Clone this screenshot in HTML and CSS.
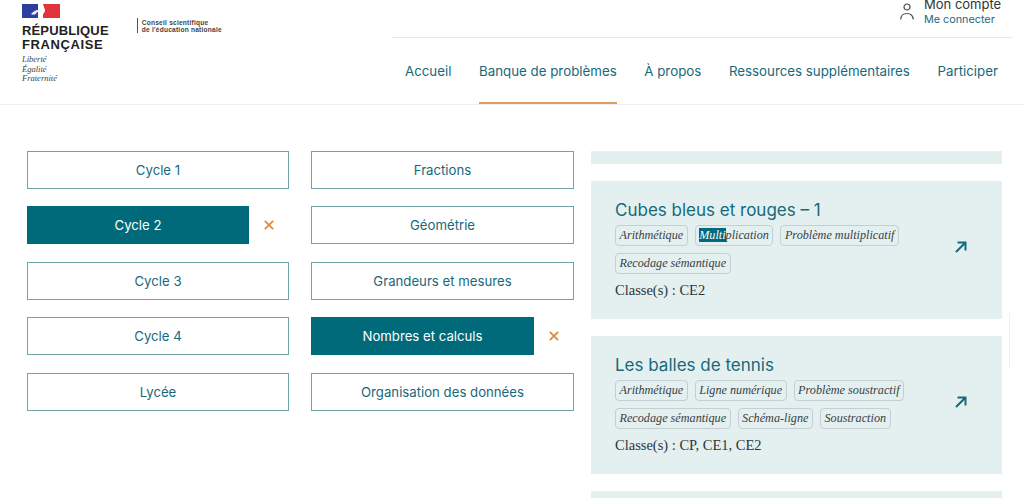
FILE: index.html
```html
<!DOCTYPE html>
<html lang="fr">
  <head>
    <meta charset="UTF-8" />
    <meta name="viewport" content="width=device-width, initial-scale=1.0" />
    <title>Banque de problèmes</title>
    <link rel="stylesheet" href="styles.css">
  </head>
  <body>
    <header class="header">
      <div class="brand">
        <div class="brand-main">
          <svg class="flag" width="38" height="14" viewBox="0 0 38 14">
            <rect width="16" height="14" fill="#2b3f9e" />
            <rect x="21" width="17" height="14" fill="#e1333b" />
            <path d="M21 14 L21 10 C22 9 23 8 23 6 L21 0 L16 0 L16 14 Z" fill="#fff" />
            <path d="M9 10 C11 8 13 6 16 6 L16 8 C15 8 14 9 14 10 C12 11 10 11 9 10 Z" fill="#e8e8f2" />
          </svg>
          <div class="republic">RÉPUBLIQUE<br /><span class="republic-wide">FRANÇAISE</span></div>
          <div class="motto">Liberté<br />Égalité<br />Fraternité</div>
        </div>
        <div class="council">Conseil scientifique<br />de l'éducation nationale</div>
      </div>

      <div class="header-right">
        <div class="account">
          <svg class="account-icon" width="14" height="18" viewBox="0 0 14 18" fill="none" stroke="#4a4f52" stroke-width="1.2">
            <circle cx="7" cy="4" r="3" />
            <path d="M0.8 16.5 C0.8 12.5 3.5 10.5 7 10.5 C10.5 10.5 13.2 12.5 13.2 16.5" />
          </svg>
          <div>
            <div class="account-title">Mon compte</div>
            <a class="account-link" href="#">Me connecter</a>
          </div>
        </div>
        <nav class="nav">
          <a href="#">Accueil</a>
          <a class="active" href="#">Banque de problèmes</a>
          <a href="#">À propos</a>
          <a href="#">Ressources supplémentaires</a>
          <a href="#">Participer</a>
        </nav>
      </div>
    </header>

    <main class="main">
      <div class="filters">
        <div class="filter-col">
          <div class="filter-row"><button class="filter">Cycle 1</button></div>
          <div class="filter-row">
            <button class="filter selected">Cycle 2</button>
            <svg class="remove" width="10" height="10" viewBox="0 0 10 10" stroke="#e08a3c" stroke-width="1.8">
              <path d="M0.8 0.8 L9.2 9.2 M9.2 0.8 L0.8 9.2" />
            </svg>
          </div>
          <div class="filter-row"><button class="filter">Cycle 3</button></div>
          <div class="filter-row"><button class="filter">Cycle 4</button></div>
          <div class="filter-row"><button class="filter">Lycée</button></div>
        </div>
        <div class="filter-col">
          <div class="filter-row"><button class="filter">Fractions</button></div>
          <div class="filter-row"><button class="filter">Géométrie</button></div>
          <div class="filter-row"><button class="filter">Grandeurs et mesures</button></div>
          <div class="filter-row">
            <button class="filter selected">Nombres et calculs</button>
            <svg class="remove" width="10" height="10" viewBox="0 0 10 10" stroke="#e08a3c" stroke-width="1.8">
              <path d="M0.8 0.8 L9.2 9.2 M9.2 0.8 L0.8 9.2" />
            </svg>
          </div>
          <div class="filter-row"><button class="filter">Organisation des données</button></div>
        </div>
      </div>

      <div class="results">
        <div class="card card-stub"></div>

        <article class="card">
          <div class="card-body">
            <h2>Cubes bleus et rouges – 1</h2>
            <div class="tags">
              <span class="tag">Arithmétique</span>
              <span class="tag"><span class="mark">Multi</span>plication</span>
              <span class="tag">Problème multiplicatif</span>
              <span class="tag">Recodage sémantique</span>
            </div>
            <p class="grade">Classe(s) : CE2</p>
          </div>
          <svg class="arrow" width="14" height="14" viewBox="0 0 14 14" fill="none" stroke="#17697a" stroke-width="2">
            <path d="M2 12 L11.5 2.5 M3.5 2.5 H11.5 V10.5" />
          </svg>
        </article>

        <article class="card">
          <div class="card-body">
            <h2>Les balles de tennis</h2>
            <div class="tags">
              <span class="tag">Arithmétique</span>
              <span class="tag">Ligne numérique</span>
              <span class="tag">Problème soustractif</span>
              <span class="tag">Recodage sémantique</span>
              <span class="tag">Schéma-ligne</span>
              <span class="tag">Soustraction</span>
            </div>
            <p class="grade">Classe(s) : CP, CE1, CE2</p>
          </div>
          <svg class="arrow" width="14" height="14" viewBox="0 0 14 14" fill="none" stroke="#17697a" stroke-width="2">
            <path d="M2 12 L11.5 2.5 M3.5 2.5 H11.5 V10.5" />
          </svg>
        </article>

        <div class="card card-stub"></div>
      </div>
    </main>

    <div class="scroll-mark"></div>
  </body>
</html>
```

FILE: styles.css
```css
* {
  margin: 0;
  padding: 0;
  box-sizing: border-box;
}

html,
body {
  height: 498px;
  overflow: hidden;
}

body {
  font-family: "Inter", "Liberation Sans", sans-serif;
  background-color: #fff;
  color: #2c3538;
  position: relative;
}

.header {
  height: 105px;
  display: flex;
  justify-content: space-between;
  padding: 4px 12px 0 22px;
  border-bottom: 1px solid #f0f0f0;
}

.brand {
  display: flex;
}

.flag {
  display: block;
}

.republic {
  margin-top: 6px;
  font-family: "Liberation Sans", sans-serif;
  font-size: 13px;
  line-height: 14px;
  font-weight: bold;
  letter-spacing: 0.15px;
  color: #222;
}

.republic-wide {
  letter-spacing: 0.6px;
}

.motto {
  margin-top: 3px;
  font-family: "Liberation Serif", serif;
  font-style: italic;
  font-size: 8.5px;
  line-height: 9.5px;
  color: #444;
}

.council {
  margin: 14px 0 0 28px;
  height: 15px;
  padding: 1px 0 0 4px;
  border-left: 1.5px solid #555;
  font-family: "Liberation Sans", sans-serif;
  font-size: 6.6px;
  line-height: 7px;
  font-weight: bold;
  letter-spacing: 0.22px;
  color: #444;
}

.header-right {
  width: 620px;
  display: flex;
  flex-direction: column;
}

.account {
  height: 33px;
  margin-top: -7px;
  padding-left: 508px;
  display: flex;
  gap: 10px;
}

.account-icon {
  margin-top: 6px;
}

.account-title {
  font-size: 13px;
  line-height: 15px;
  color: #2c3538;
}

.account-link {
  font-size: 10.8px;
  line-height: 15px;
  color: #17697a;
  text-decoration: none;
  display: block;
}

.nav {
  flex: 1;
  margin-top: 7px;
  border-top: 1px solid #e9e9e9;
  display: flex;
  justify-content: space-between;
  padding: 0 14px 0 13px;
}

.nav a {
  height: 66px;
  line-height: 66px;
  font-size: 13.3px;
  color: #17697a;
  text-decoration: none;
  border-bottom: 2px solid transparent;
}

.nav a.active {
  border-bottom-color: #dc9f62;
}

.main {
  display: flex;
  padding: 45.5px 22px 0 27px;
}

.filters {
  display: flex;
  gap: 22px;
  margin-right: 17px;
}

.filter-col {
  width: 262px;
  display: flex;
  flex-direction: column;
  gap: 17.5px;
}

.filter-col + .filter-col {
  width: 263px;
}

.filter-row {
  display: flex;
  align-items: center;
  height: 38px;
}

.filter {
  flex: 1;
  height: 38px;
  background-color: #fff;
  border: 1px solid #6fa3a8;
  font-family: inherit;
  font-size: 13.2px;
  color: #17697a;
}

.filter.selected {
  background-color: #00697a;
  border-color: #00697a;
  color: #fff;
}

.remove {
  margin: 0 15px 0 15px;
}

.results {
  width: 411px;
  display: flex;
  flex-direction: column;
  gap: 17.5px;
}

.card {
  height: 137.5px;
  flex-shrink: 0;
  background-color: #e4f0f0;
  padding: 19px 34px 0 24px;
  display: flex;
  align-items: center;
  justify-content: space-between;
}

.card-stub {
  height: 13px;
  padding: 0;
}

.card-body {
  width: 300px;
  align-self: flex-start;
}

.card h2 {
  font-size: 17px;
  line-height: 20px;
  font-weight: 400;
  color: #17697a;
}

.tags {
  display: flex;
  flex-wrap: wrap;
  gap: 7px;
  margin-top: 5px;
}

.tag {
  height: 21px;
  padding: 0 3.5px;
  border: 1px solid #c3cfd0;
  border-radius: 4px;
  font-family: "Liberation Serif", serif;
  font-style: italic;
  font-size: 12.2px;
  line-height: 19px;
  color: #3a4144;
  white-space: nowrap;
}

.mark {
  background-color: #00697a;
  color: #fff;
}

.grade {
  margin-top: 7px;
  font-family: "Liberation Serif", serif;
  font-size: 14.5px;
  line-height: 18px;
  color: #2c3538;
}

.arrow {
  margin-top: -24px;
}

.scroll-mark {
  position: absolute;
  left: 1009px;
  top: 313px;
  width: 1px;
  height: 55px;
  background-color: #f0f0f0;
}
```
